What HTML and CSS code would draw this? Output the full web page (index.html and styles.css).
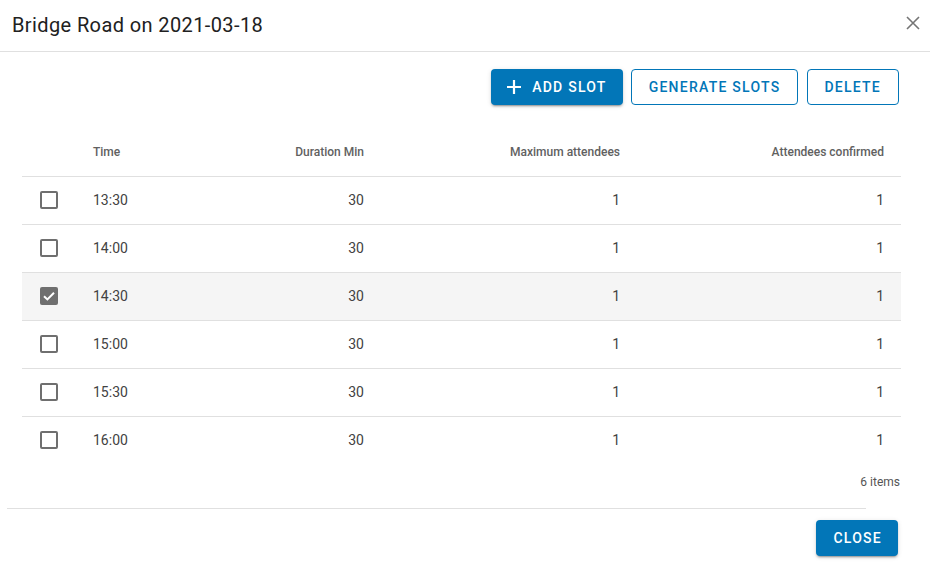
FILE: index.html
```html
<!DOCTYPE html>
<html>
<head>
<meta charset="utf-8">
<link rel="stylesheet" href="styles.css">
</head>
<body>
<div class="dialog">
  <div class="dialog-header">
    <h1 class="dialog-title">Bridge Road on 2021-03-18</h1>
    <button class="icon-btn" aria-label="close">
      <svg width="16" height="16" viewBox="0 0 16 16"><path d="M2 2L14 14M14 2L2 14" stroke="#757575" stroke-width="1.6" fill="none"/></svg>
    </button>
  </div>
  <div class="dialog-body">
    <div class="actions">
      <button class="btn btn-contained add">
        <svg class="plus" width="14" height="14" viewBox="0 0 14 14"><path d="M7 0V14M0 7H14" stroke="#fff" stroke-width="2.2"/></svg>
        ADD SLOT
      </button>
      <button class="btn btn-outlined">GENERATE SLOTS</button>
      <button class="btn btn-outlined del">DELETE</button>
    </div>
    <table class="grid">
      <colgroup>
        <col class="c1"><col class="c2"><col class="c3"><col class="c4"><col class="c5">
      </colgroup>
      <thead>
        <tr>
          <th></th>
          <th class="left">Time</th>
          <th class="right">Duration Min</th>
          <th class="right">Maximum attendees</th>
          <th class="right last">Attendees confirmed</th>
        </tr>
      </thead>
      <tbody>
        <tr><td><span class="cb"></span></td><td>13:30</td><td class="right">30</td><td class="right">1</td><td class="right last">1</td></tr>
        <tr><td><span class="cb"></span></td><td>14:00</td><td class="right">30</td><td class="right">1</td><td class="right last">1</td></tr>
        <tr class="selected"><td><span class="cb checked"><svg width="18" height="18" viewBox="0 0 18 18"><path d="M4 9.2L7.4 12.4L14 5.8" stroke="#fff" stroke-width="2" fill="none"/></svg></span></td><td>14:30</td><td class="right">30</td><td class="right">1</td><td class="right last">1</td></tr>
        <tr><td><span class="cb"></span></td><td>15:00</td><td class="right">30</td><td class="right">1</td><td class="right last">1</td></tr>
        <tr><td><span class="cb"></span></td><td>15:30</td><td class="right">30</td><td class="right">1</td><td class="right last">1</td></tr>
        <tr class="final"><td><span class="cb"></span></td><td>16:00</td><td class="right">30</td><td class="right">1</td><td class="right last">1</td></tr>
      </tbody>
    </table>
    <div class="pager">6 items</div>
  </div>
  <div class="dialog-footer">
    <div class="footer-line"></div>
    <div class="footer-actions">
      <button class="btn btn-contained close">CLOSE</button>
    </div>
  </div>
</div>
</body>
</html>
```
FILE: styles.css
```css
* { box-sizing: border-box; }
html, body { margin: 0; padding: 0; background: #fff; }
body { font-family: Roboto, "Liberation Sans", Arial, sans-serif; color: #212121; }
.dialog { width: 930px; height: 572px; background: #fff; }
.dialog-header {
  height: 52px;
  border-bottom: 1px solid #e0e0e0;
  display: flex;
  align-items: center;
  justify-content: space-between;
  padding: 0 5px 0 12px;
}
.dialog-title { margin: 0; font-size: 20px; font-weight: 400; color: #212121; letter-spacing: 0.39px; padding-bottom: 2px; }
.icon-btn { border: 0; background: none; padding: 0; width: 24px; height: 24px; display: flex; align-items: center; justify-content: center; margin-top: -6px; }
.dialog-body { padding: 17px 29px 0 22px; }
.actions { display: flex; justify-content: flex-end; gap: 8px; padding-right: 2px; }
.btn {
  font-family: Roboto, "Liberation Sans", Arial, sans-serif;
  font-size: 14px;
  font-weight: 500;
  letter-spacing: 1.25px;
  height: 36px;
  border-radius: 4px;
  padding: 0 17px;
  display: inline-flex;
  align-items: center;
  cursor: pointer;
}
.btn-contained {
  background: #0276b8;
  color: #fff;
  border: 0;
  box-shadow: 0 3px 1px -2px rgba(0,0,0,.2), 0 2px 2px 0 rgba(0,0,0,.14), 0 1px 5px 0 rgba(0,0,0,.12);
}
.btn.add { padding: 0 16px 0 16px; }
.btn-contained .plus { margin-right: 11px; }
.btn-outlined { background: #fff; color: #0276b8; border: 1px solid #0276b8; }
.btn.del { margin-left: 1px; padding: 0 17px 0 16px; }
.grid { width: 879px; border-collapse: collapse; table-layout: fixed; margin-top: 23px; }
.c1 { width: 55px; }
.c2 { width: 150px; }
.c3 { width: 153px; }
.c4 { width: 256px; }
.c5 { width: 265px; }
.grid th {
  height: 48px;
  font-size: 12px;
  font-weight: 500;
  color: #616161;
  padding: 0 16px;
  border-bottom: 1px solid #e0e0e0;
}
.grid td {
  height: 48px;
  font-size: 14px;
  color: #424242;
  padding: 0 16px;
  border-bottom: 1px solid #e0e0e0;
}
.grid td:first-child { padding: 0 0 0 18px; }
.grid tr.final td { border-bottom: 0; }
.grid .left { text-align: left; }
.grid .right { text-align: right; }
.grid .last { padding-right: 17px; }
.grid tr.selected td { background: #f5f5f5; }
.cb {
  display: block;
  width: 18px;
  height: 18px;
  border: 2px solid #6f6f6f;
  border-radius: 2px;
}
.cb.checked { border: 0; background: #6f6f6f; }
.cb svg { display: block; }
.pager { text-align: right; font-size: 12px; color: #555; padding: 11px 1px 0 0; height: 44px; }
.dialog-footer { padding: 0; }
.footer-line { margin-left: 7px; width: 859px; border-top: 1px solid #e0e0e0; }
.footer-actions { display: flex; justify-content: flex-end; padding: 11px 32px 0 0; }
.btn.close { height: 36px; padding: 0 16px 0 17px; }
```
